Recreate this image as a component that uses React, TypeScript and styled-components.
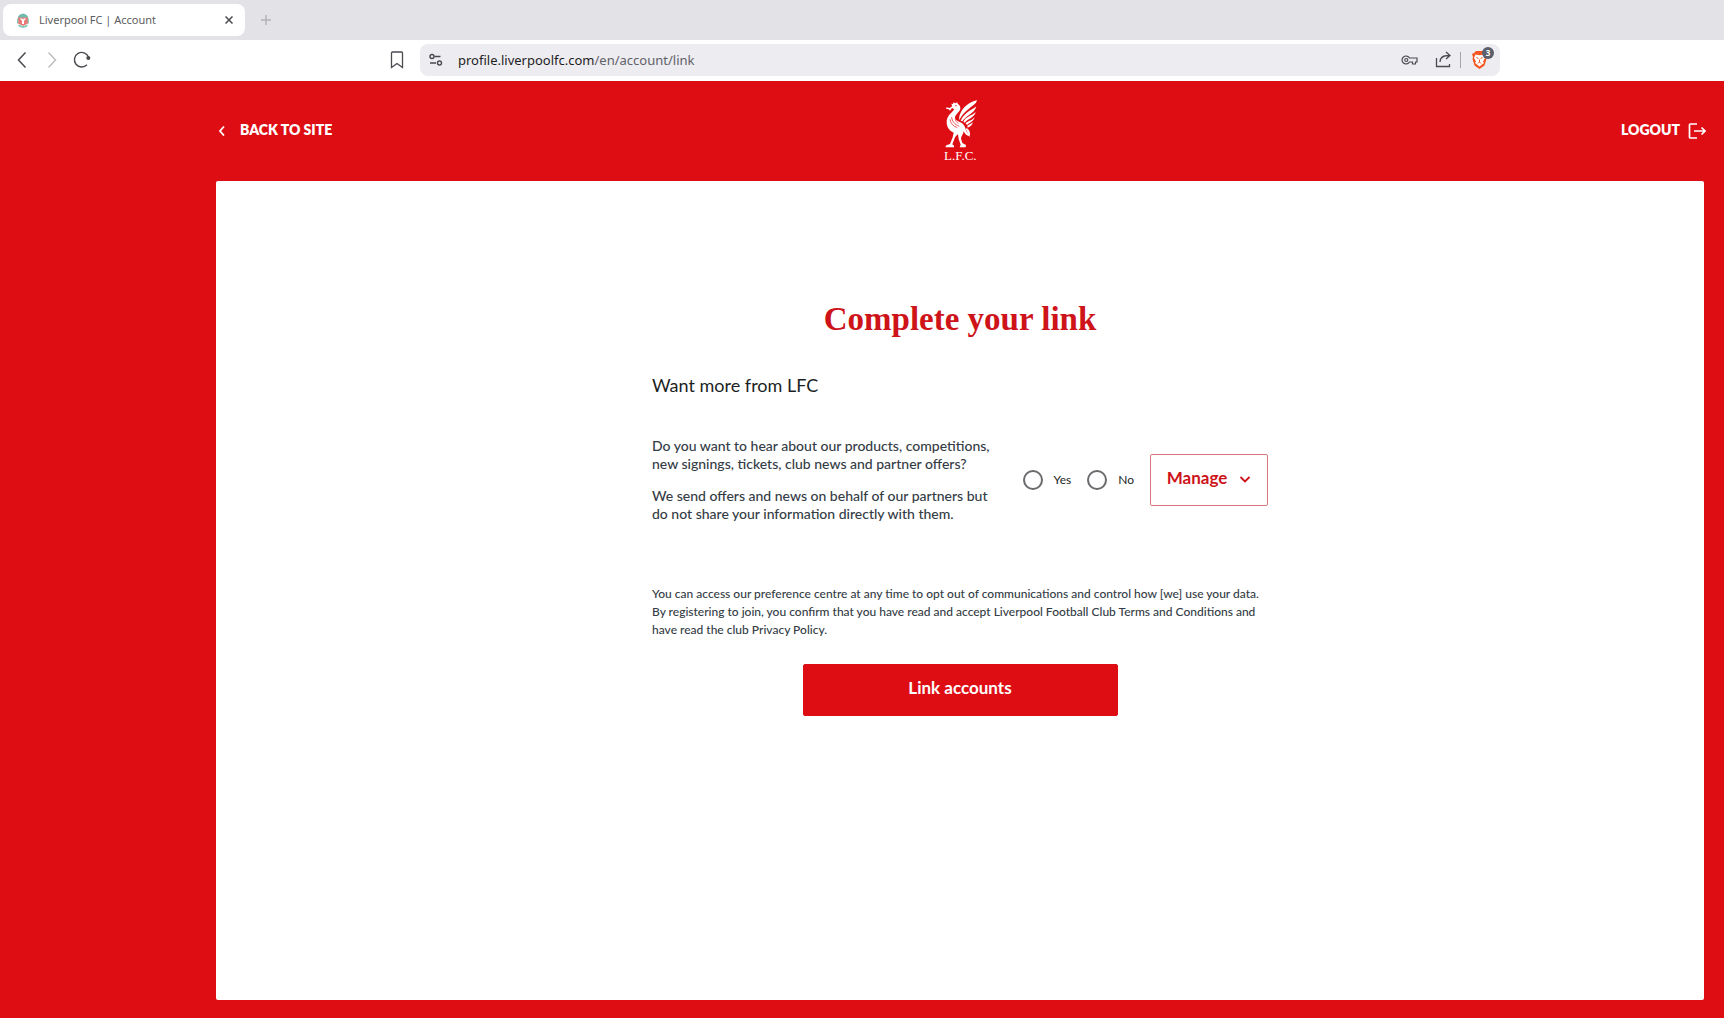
import React, { useState } from "react";
import styled, { createGlobalStyle } from "styled-components";

const sans = `Lato, "Noto Sans", sans-serif`;
const chrome = `"Noto Sans", "Open Sans", sans-serif`;
const serif = `"Liberation Serif", "Times New Roman", serif`;
const red = "#de0d14";
const darkRed = "#ce1319";

const GlobalStyle = createGlobalStyle`
  *, *::before, *::after { box-sizing: border-box; }
  body { margin: 0; font-family: ${sans}; color: #1c1f24; }
  button, input { font: inherit; margin: 0; }
  h1, h2, p { margin: 0; }
`;

const Page = styled.div`
  display: flex;
  flex-direction: column;
  min-height: 100vh;
  background: ${red};
`;

const TabStrip = styled.div`
  display: flex;
  align-items: center;
  gap: 15px;
  height: 40px;
  padding: 0 3px;
  background: #e3e2e7;
`;

const Tab = styled.div`
  display: flex;
  align-items: center;
  width: 242px;
  height: 32px;
  padding: 0 10px 0 14px;
  border-radius: 8px;
  background: #fff;
  color: #5c5c60;
  font: 11px/16px ${chrome};
`;

const TabTitle = styled.span`
  flex: 1;
  margin-left: 10px;
`;

const IconButton = styled.button<{ $size?: number; $color?: string }>`
  display: grid;
  place-items: center;
  flex: none;
  width: ${(p) => p.$size ?? 20}px;
  height: ${(p) => p.$size ?? 20}px;
  padding: 0;
  border: 0;
  background: none;
  color: ${(p) => p.$color ?? "#4a4b50"};
  cursor: pointer;

  svg {
    display: block;
    fill: none;
    stroke: currentColor;
  }
`;

const Toolbar = styled.div`
  display: flex;
  align-items: center;
  height: 41px;
  padding: 0 224px 1px 12px;
  background: #fff;
`;

const NavButtons = styled.div`
  display: flex;
  gap: 10px;
  flex: 1;
`;

const AddressBar = styled.div`
  display: flex;
  align-items: center;
  width: 1080px;
  height: 32px;
  margin-left: 13px;
  padding: 0 6px;
  border-radius: 8px;
  background: #edecf1;
`;

const Address = styled.span`
  flex: 1;
  margin-left: 12px;
  color: #606168;
  font: 13px/20px ${chrome};
`;

const Host = styled.span`
  color: #1d1e24;
`;

const PageActions = styled.div`
  display: flex;
  gap: 14px;
`;

const Divider = styled.span`
  width: 1px;
  height: 16px;
  margin: 0 10px 0 6px;
  background: #a5a5ab;
`;

const ShieldWrap = styled.span`
  position: relative;
  width: 23px;
  height: 20px;

  svg { display: block; }
`;

const ShieldCount = styled.span`
  position: absolute;
  top: -3px;
  right: 0;
  width: 12px;
  height: 12px;
  border-radius: 6px;
  background: #5b5f6b;
  color: #fff;
  font: 700 8px/12px ${chrome};
  text-align: center;
`;

const SiteHeader = styled.header`
  display: grid;
  grid-template-columns: 1fr auto 1fr;
  align-items: center;
  height: 100px;
  padding: 0 18px 2px 216px;
`;

const HeaderLink = styled.a<{ $end?: boolean }>`
  display: flex;
  align-items: center;
  justify-self: ${(p) => (p.$end ? "end" : "start")};
  gap: ${(p) => (p.$end ? 8 : 12)}px;
  color: #fff;
  font-size: 14px;
  font-weight: 800;
  line-height: 20px;
  text-decoration: none;
`;

const Crest = styled.a`
  display: flex;
  flex-direction: column;
  align-items: flex-start;
  margin-top: 4px;
  color: #fff;
  font: 13px/16px ${serif};
  text-decoration: none;

  svg { display: block; }
`;

const Panel = styled.main`
  flex: 1;
  margin: 0 20px 18px 216px;
  padding: 118px 24px 0;
  border-radius: 2px;
  background: #fff;
`;

const Form = styled.form`
  display: flex;
  flex-direction: column;
  max-width: 616px;
  margin: 0 auto;
`;

const Title = styled.h1`
  color: ${darkRed};
  font: 700 33px/40px ${serif};
  text-align: center;
`;

const Subtitle = styled.h2`
  margin-top: 34px;
  font-size: 18px;
  font-weight: 400;
  line-height: 24px;
`;

const Preference = styled.div`
  display: flex;
  align-items: center;
  justify-content: space-between;
  margin-top: 40px;
`;

const Copy = styled.div`
  display: flex;
  flex-direction: column;
  gap: 14px;
  max-width: 345px;
  color: #343c45;
  font-size: 14px;
  font-weight: 500;
  line-height: 18px;
`;

const Controls = styled.div`
  display: flex;
  align-items: center;
  gap: 16px;
`;

const RadioLabel = styled.label`
  display: flex;
  align-items: center;
  gap: 11px;
  font-size: 12px;
  line-height: 18px;
  cursor: pointer;
`;

const Radio = styled.input`
  appearance: none;
  width: 20px;
  height: 20px;
  border: 2px solid #6a6b6e;
  border-radius: 50%;
  background: #fff;

  &:checked {
    background: radial-gradient(${red} 5px, #fff 6px);
  }
`;

const ActionButton = styled.button<{ $primary?: boolean }>`
  display: flex;
  align-items: center;
  justify-content: center;
  gap: 12px;
  width: ${(p) => (p.$primary ? 315 : 118)}px;
  height: 52px;
  padding: 0 0 4px;
  border: 1px solid ${(p) => (p.$primary ? red : "#d9797d")};
  border-radius: 2px;
  background: ${(p) => (p.$primary ? red : "#fff")};
  color: ${(p) => (p.$primary ? "#fff" : darkRed)};
  font-size: 17px;
  font-weight: 700;
  line-height: 24px;
  cursor: pointer;
`;

const Terms = styled.p`
  margin-top: 62px;
  color: #343c45;
  font-size: 12px;
  font-weight: 500;
  line-height: 18px;
`;

const Submit = styled.div`
  display: flex;
  justify-content: center;
  margin-top: 25px;
`;

const ClubIcon = () => (
  <svg width="12" height="15" viewBox="0 0 12 15" aria-hidden="true">
    <path d="M1 3.500 3 1.500 6 .5l3 1 2 2V5H1z" fill="#6fbcae" />
    <path d="M1 4.500h10v6L6 13l-5-2.500z" fill="#ea7a78" />
    <path d="M3 5.500h2l1 1 1-1h2L7 8v3H5V8z" fill="#fff" />
    <path d="M0 5.500h1.300v5H0zM10.700 5.500H12v5h-1.300zM1 11.500l5 1.500 5-1.500-1 2.500-4 1-4-1z" fill="#8bcabd" />
  </svg>
);

const LiverBird = () => (
  <svg width="34" height="48" viewBox="15 8 102 144" fill="#fff" aria-hidden="true">
    <path d="M39 23l-3-4 6 1 2-5 5 3 6-3 1 4c7 4 10 12 7 19-4 8-13 13-15 21-1 7 6 12 14 15 10 3 16 12 18 22 2 9 9 14 14 22-10-2-17-8-20-16-1 9-8 15-8 22l4 13 11 6-1 7H62l3-8-6-17-2-14c-4 3-8 6-10 12l-7 18 5 4v5H19l3-6 11-4 8-20 3-14c-13-5-21-17-21-31 0-15 8-23 16-31l7-8-7-4-6 8-4-4-8-2 2-4 8 2 7-4z" />
    <path d="M114 9C98 12 78 24 69 39c-6 10-10 19-8 30 7-17 23-31 39-43 8-5 13-11 14-17z" />
    <path d="M112 27C98 39 76 45 65 70l5 2c9-16 37-23 42-45z" />
    <path d="M110 44C98 56 82 56 73 73l4 3c10-12 29-15 33-32z" />
    <path d="M107 60c-8 10-19 10-27 18l4 5c9-7 19-10 23-23z" />
    <path d="M102 75c-6 5-10 6-17 10l1 6c8-3 13-7 16-16z" />
    <path d="M84 93c8 5 10 13 9 22-6-5-9-12-13-21z" />
    <path d="M54 53c-8 10-6 19 4 25M33 66c2 13 10 21 22 25M38 59c1 14 9 22 23 28" fill="none" stroke="#de0d14" strokeWidth="2" />
    <circle cx="51" cy="25" r="2" fill="#de0d14" />
  </svg>
);

export default function App() {
  const [choice, setChoice] = useState("");

  return (
    <Page>
      <GlobalStyle />
      <TabStrip>
        <Tab>
          <ClubIcon />
          <TabTitle>Liverpool FC | Account</TabTitle>
          <IconButton $size={12} aria-label="Close tab">
            <svg width="8" height="8" viewBox="0 0 8 8" strokeWidth="1.500">
              <path d="m.5.5 7 7m0-7-7 7" />
            </svg>
          </IconButton>
        </Tab>
        <IconButton $size={12} $color="#b4b3b8" aria-label="New tab">
          <svg width="10" height="10" viewBox="0 0 10 10" strokeWidth="1.500">
            <path d="M5 0v10M0 5h10" />
          </svg>
        </IconButton>
      </TabStrip>

      <Toolbar>
        <NavButtons>
          <IconButton aria-label="Back">
            <svg width="20" height="20" viewBox="0 0 20 20" strokeWidth="1.500">
              <path d="m13.500 2.500-7 7.500 7 7.500" />
            </svg>
          </IconButton>
          <IconButton $color="#bebec2" aria-label="Forward">
            <svg width="20" height="20" viewBox="0 0 20 20" strokeWidth="1.500">
              <path d="m6.500 2.500 7 7.500-7 7.500" />
            </svg>
          </IconButton>
          <IconButton aria-label="Reload">
            <svg width="20" height="20" viewBox="0 0 20 20" strokeWidth="1.400">
              <path d="M15 14.800A7.300 7.300 0 1 1 16.500 7" />
              <circle cx="16.300" cy="8" r="2" fill="currentColor" stroke="none" />
            </svg>
          </IconButton>
        </NavButtons>
        <IconButton aria-label="Bookmark this page">
          <svg width="20" height="20" viewBox="0 0 20 20" strokeWidth="1.300">
            <path d="M5.500 2h9a1 1 0 0 1 1 1v14.500L10 13.500l-5.500 4V3a1 1 0 0 1 1-1z" />
          </svg>
        </IconButton>
        <AddressBar>
          <IconButton aria-label="Site information">
            <svg width="20" height="20" viewBox="0 0 20 20" strokeWidth="1.400">
              <circle cx="6" cy="6.500" r="2" />
              <path d="M8.500 6.500h6M4 13h6" />
              <circle cx="13.500" cy="13" r="2" />
            </svg>
          </IconButton>
          <Address>
            <Host>profile.liverpoolfc.com</Host>/en/account/link
          </Address>
          <PageActions>
            <IconButton aria-label="Passwords">
              <svg width="20" height="20" viewBox="0 0 20 20" strokeWidth="1.200">
                <path d="M9.500 8H17v4h-1.500v2h-3v-2h-3A4 4 0 1 1 9.500 8z" />
                <circle cx="6.300" cy="10" r="1.500" />
              </svg>
            </IconButton>
            <IconButton aria-label="Share">
              <svg width="20" height="20" viewBox="0 0 20 20" strokeWidth="1.300">
                <path d="M2.500 8v8.500h13V14M6 12c0-4 2-6.500 9-6.500M12 2l4 3.500L12 9" />
              </svg>
            </IconButton>
          </PageActions>
          <Divider />
          <ShieldWrap>
            <svg width="18" height="20" viewBox="0 0 18 20" aria-hidden="true">
              <path d="M5 1h7l2 2 2 1-1 3 .5 2-2 6.500L8.500 19l-5-3.500L1.500 9 2 7 1 4l2-1z" fill="#f4561f" />
              <path d="m4.500 4.500 4 .7 4-.7L14 8l-2 3.500 1 1.500-4.500 3.500L4 13l1-1.500L3 8z" fill="#fff" />
              <path d="m5.500 7.500 2 1M11.500 7.500l-2 1M8.500 9.500V12M7 13.500 8.500 12l1.500 1.500" fill="none" stroke="#f4561f" />
            </svg>
            <ShieldCount>3</ShieldCount>
          </ShieldWrap>
        </AddressBar>
      </Toolbar>

      <SiteHeader>
        <HeaderLink href="#site">
          <svg width="12" height="12" viewBox="0 0 12 12" fill="none" stroke="#fff" strokeWidth="1.800">
            <path d="M8 2.500 4 7l4 4.500" />
          </svg>
          BACK TO SITE
        </HeaderLink>
        <Crest href="#home" aria-label="Liverpool FC home">
          <LiverBird />
          <span>L.F.C.</span>
        </Crest>
        <HeaderLink href="#logout" $end>
          LOGOUT
          <svg width="18" height="18" viewBox="0 0 18 18" fill="none" stroke="#fff" strokeWidth="1.700">
            <path d="M9 3H2.500a1 1 0 0 0-1 1v12a1 1 0 0 0 1 1H9M6 10h11M13.500 6.500 17 10l-3.500 3.500" />
          </svg>
        </HeaderLink>
      </SiteHeader>

      <Panel>
        <Form onSubmit={(e) => e.preventDefault()}>
          <Title>Complete your link</Title>
          <Subtitle>Want more from LFC</Subtitle>
          <Preference>
            <Copy>
              <p>
                Do you want to hear about our products, competitions, new signings, tickets, club news and
                partner offers?
              </p>
              <p>
                We send offers and news on behalf of our partners but do not share your information directly
                with them.
              </p>
            </Copy>
            <Controls>
              {["Yes", "No"].map((option) => (
                <RadioLabel key={option}>
                  <Radio
                    type="radio"
                    name="marketing"
                    value={option}
                    checked={choice === option}
                    onChange={() => setChoice(option)}
                  />
                  {option}
                </RadioLabel>
              ))}
              <ActionButton type="button">
                Manage
                <svg width="12" height="12" viewBox="0 0 12 12" fill="none" stroke="currentColor" strokeWidth="1.800">
                  <path d="m1.500 5 4.500 4.500L10.500 5" />
                </svg>
              </ActionButton>
            </Controls>
          </Preference>
          <Terms>
            You can access our preference centre at any time to opt out of communications and control how [we]
            use your data. By registering to join, you confirm that you have read and accept Liverpool Football
            Club Terms and Conditions and have read the club Privacy Policy.
          </Terms>
          <Submit>
            <ActionButton type="submit" $primary>
              Link accounts
            </ActionButton>
          </Submit>
        </Form>
      </Panel>
    </Page>
  );
}
